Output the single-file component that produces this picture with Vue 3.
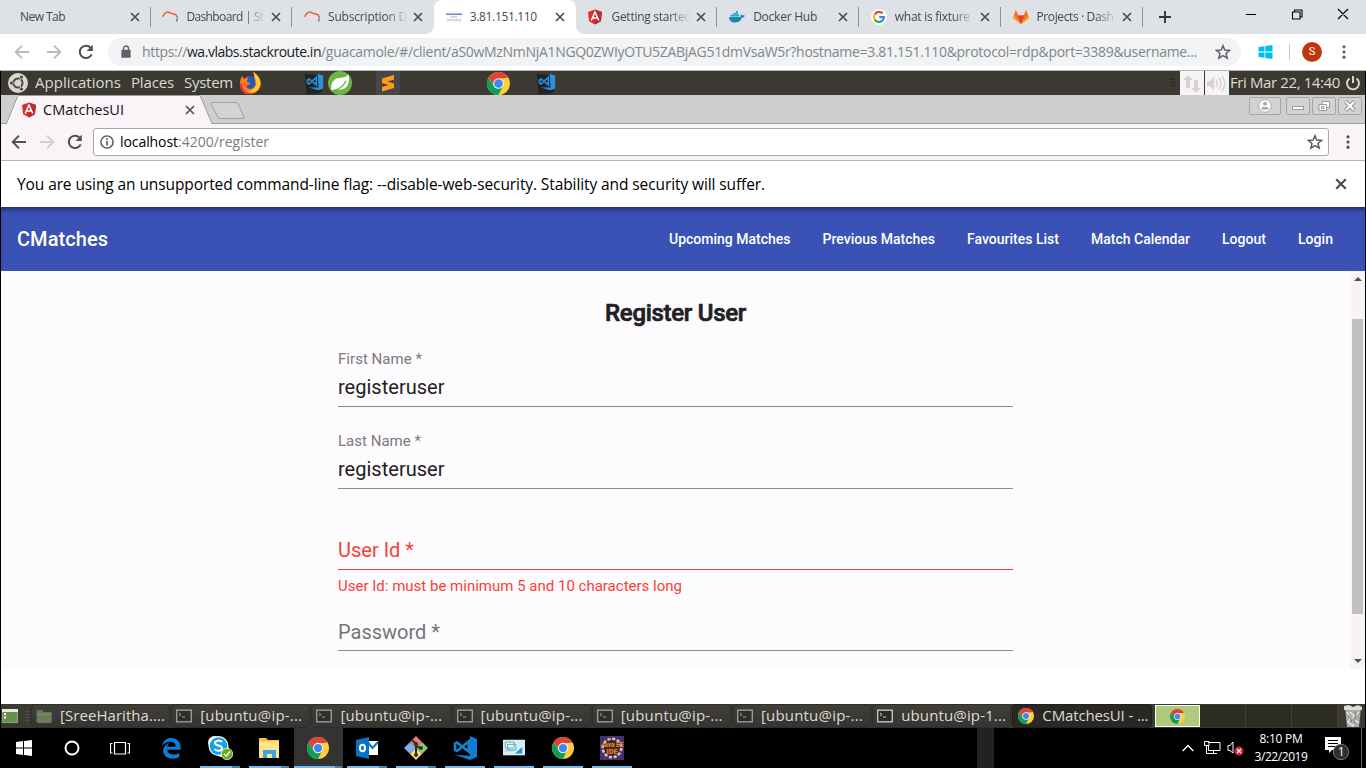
<script setup>
// Spreads the letters of a label so that it takes the given width in pixels.
const vFit = {
  mounted(el, { value }) {
    if (!value) return
    const natural = el.getBoundingClientRect().width
    el.style.letterSpacing = (value - natural) / el.textContent.length + 'px'
  }
}

const tabs = [
  { title: 'New Tab', w: 45 },
  { title: 'Dashboard | St', w: 77, icon: 'stack', sep: true, fade: true },
  { title: 'Subscription D', w: 79, icon: 'stack', fade: true, sep: true },
  { title: '3.81.151.110', w: 67, icon: 'doc', active: true },
  { title: 'Getting started', w: 80, icon: 'angular', fade: true },
  { title: 'Docker Hub', w: 64, icon: 'docker', sep: true },
  { title: 'what is fixture', w: 75, icon: 'google', sep: true, fade: true },
  { title: 'Projects · Dash', w: 77, icon: 'gitlab', sep: true, fade: true, last: true }
]

const links = [
  ['Upcoming Matches', 121.5],
  ['Previous Matches', 112.5],
  ['Favourites List', 92],
  ['Match Calendar', 99],
  ['Logout', 44],
  ['Login', 35]
]

const fields = [
  { label: 'First Name *', lw: 84, value: 'registeruser' },
  { label: 'Last Name *', lw: 83, value: 'registeruser' },
  { placeholder: 'User Id *', w: 76, error: 'User Id: must be minimum 5 and 10 characters long' },
  { placeholder: 'Password *', w: 102 }
]

const windows = [
  { title: '[SreeHaritha....', w: 105, icon: 'folder', dim: true },
  { title: '[ubuntu@ip-...', w: 102, icon: 'term', dim: true },
  { title: '[ubuntu@ip-...', w: 102, icon: 'term', dim: true },
  { title: '[ubuntu@ip-...', w: 102, icon: 'term', dim: true },
  { title: '[ubuntu@ip-...', w: 102, icon: 'term', dim: true },
  { title: '[ubuntu@ip-...', w: 102, icon: 'term', dim: true },
  { title: 'ubuntu@ip-1...', w: 105, icon: 'term' },
  { title: 'CMatchesUI - ...', w: 106, icon: 'chrome', active: true }
]

const apps = [
  { icon: 'edge' },
  { icon: 'skype', open: true, multi: true },
  { icon: 'explorer', open: true, multi: true },
  { icon: 'chrome', open: true, multi: true, active: true },
  { icon: 'outlook', open: true, multi: true },
  { icon: 'git', open: true, multi: true },
  { icon: 'code', open: true },
  { icon: 'remote', open: true },
  { icon: 'chrome', open: true },
  { icon: 'ide', open: true }
]
</script>

<template>
  <div class="screen">
    <svg class="defs" width="0" height="0">
      <symbol id="x" viewBox="0 0 10 10"><path d="M1 1 9 9M9 1 1 9" stroke="currentColor" stroke-width="1.7" fill="none" /></symbol>
      <symbol id="stack" viewBox="0 0 16 16">
        <path d="M.300 7.500C1.500 7.500 1.800 5.500 3 4.300C4.300 3 6.500 2.800 8 3.800C9.300 4.900 10.500 4.700 12 5C14.300 5.500 15.300 7 15.500 9" fill="none" stroke="#f0592b" stroke-width="1.500" />
        <path d="M15.300 9.500 14.500 12.500" stroke="#3f7f88" stroke-width="1.300" />
      </symbol>
      <symbol id="doc" viewBox="0 0 16 16">
        <path d="M0 2H16V14H0Z" fill="#f7f8fc" /><path d="M0 5.200H16" stroke="#5f72bd" stroke-width="1.300" /><path d="M5 7.800H11M1 11H15" stroke="#b9bbc6" />
      </symbol>
      <symbol id="angular" viewBox="0 0 16 16">
        <path d="M8 .5 15 3 13.900 12.200 8 15.500 2.100 12.200 1 3Z" fill="#dd2c34" /><path d="M8 .5 15 3 13.900 12.200 8 15.500Z" fill="#b52e31" />
        <path d="M4.200 11.500 8 3 11.800 11.500M5.700 9.100H10.300" fill="none" stroke="#fff" stroke-width="1.500" />
      </symbol>
      <symbol id="docker" viewBox="0 0 16 16">
        <path d="M0 8H11.500C12 7.500 12 6.200 11.600 5.300C12.400 4.900 13 5.900 13.300 6.500C14.300 6.100 15.300 6.300 16 6.800C15.300 8.200 14 8.500 13 8.500C11.500 12.500 9 13.500 5.500 13.500C2 13.500.2 11.500 0 8Z" fill="#1e88a8" />
        <path d="M1.500 5.700H10.500V7.600H1.500ZM4 3.900H9V5.500H4ZM7 2H9V3.700H7Z" fill="#2aa5cd" />
      </symbol>
      <symbol id="google" viewBox="0 0 16 16">
        <circle cx="8" cy="8" r="8" fill="#fff" />
        <g fill="none" stroke-width="2.200"><path d="M11.700 4.300A5 5 0 0 0 3.700 5.500" stroke="#ea4335" /><path d="M3.700 5.500A5 5 0 0 0 3.700 10.500" stroke="#fbbc05" /><path d="M3.700 10.500A5 5 0 0 0 11.300 11.700" stroke="#34a853" /><path d="M11.300 11.700A5 5 0 0 0 12.900 8.200H8.200" stroke="#4285f4" /></g>
      </symbol>
      <symbol id="gitlab" viewBox="0 0 16 16">
        <path d="M8 15 0 9 2.800 1 5.500 6.500H10.500L13.200 1 16 9Z" fill="#fc6d26" /><path d="M8 15 4.900 6.500H11.100Z" fill="#e24329" /><path d="M0 9 1.200 6.500 8 15ZM16 9 14.800 6.500 8 15Z" fill="#fca326" />
      </symbol>
      <symbol id="back" viewBox="0 0 16 16"><path d="M15 8H2M8 1.700 1.700 8 8 14.300" fill="none" stroke="currentColor" stroke-width="1.900" /></symbol>
      <symbol id="reload" viewBox="0 0 16 16"><path d="M13.700 10.300A6.200 6.200 0 1 1 12.600 3.700" fill="none" stroke="currentColor" stroke-width="2" /><path d="M14.800.8V7H8.600Z" fill="currentColor" /></symbol>
      <symbol id="star" viewBox="0 0 16 16"><path d="M8 1.700 9.800 6 14.700 6.400 11 9.500 12.200 14.200 8 11.700 3.800 14.200 5 9.500 1.300 6.400 6.200 6Z" fill="none" stroke="currentColor" stroke-width="1.500" /></symbol>
      <symbol id="dots" viewBox="0 0 4 16"><g fill="currentColor"><circle cx="2" cy="2.800" r="1.600" /><circle cx="2" cy="8" r="1.600" /><circle cx="2" cy="13.200" r="1.600" /></g></symbol>
      <symbol id="chrome" viewBox="0 0 24 24">
        <circle cx="12" cy="12" r="12" fill="#fdd03b" />
        <path d="M1.600 6A12 12 0 0 1 22.400 6L12 7 7.700 14.500Z" fill="#db4437" />
        <path d="M1.600 6A12 12 0 0 0 12 24L16.600 14.500 12 17 7.400 14.600Z" fill="#0f9d58" />
        <circle cx="12" cy="12" r="5.600" fill="#f4f4f4" /><circle cx="12" cy="12" r="4.500" fill="#4285f4" />
      </symbol>
      <symbol id="code" viewBox="0 0 24 24">
        <path d="M17 0 24 3V21L17 24 1 18.500 17 20Z" fill="#0e7ed0" /><path d="M15.700 5.500V15.500L4 6.500 2 7.500V14L4 15Z" fill="none" stroke="#1681cd" stroke-width="2.600" />
      </symbol>
      <symbol id="codedark" viewBox="0 0 24 24">
        <path d="M2 2 20 4 20 23 4 24Z" fill="#202326" /><path d="M16 2 22 4V18L17 20 6 17 17 17Z" fill="#2a91da" /><path d="M14.500 6V14L6.500 7.500 5 9V12L6.500 13Z" fill="none" stroke="#2489d2" stroke-width="2" />
      </symbol>
      <symbol id="firefox" viewBox="0 0 24 24">
        <circle cx="11.500" cy="13" r="9" fill="#2456bd" />
        <path d="M15 0C24 6 25 15 19 20C12 26 2 23 1 14C.500 10 2 6 3.500 4L5 7.500C7 5.500 9 6 10 6L8 10 12 12C10 14 7 13 8 16C12 20 18 16 17 11C16 8 16 4 15 0Z" fill="#ff7b16" />
        <path d="M15 0C24 6 24 14 19 19C15 22 11 22 8 20C17 20 20 12 17 7Z" fill="#ffcb2d" />
        <path d="M1 12C1 21 9 25 17 22C10 23 3 20 3 12Z" fill="#e92d4f" />
      </symbol>
      <symbol id="leaf" viewBox="0 0 24 24"><circle cx="12" cy="12" r="12" fill="#6cb53f" /><path d="M20.500 3C22 11 20 18 13 18.500C9 19 5 18 3.500 19.500C2.500 14 4 8 11 7C16 6.500 19 6 20.500 3Z" fill="#fff" /><path d="M4 20C10 19 15 16 18 10" fill="none" stroke="#6cb53f" stroke-width="1.400" /></symbol>
      <symbol id="sublime" viewBox="0 0 24 24"><rect width="24" height="24" rx="2" fill="#474747" /><path d="M6 7.500 18 4V8.500L11.500 10.500 18 12.500V17L6 20.500V16L12.500 14 6 12Z" fill="#ff9a1c" /></symbol>
      <symbol id="ubuntu" viewBox="0 0 20 20">
        <circle cx="10" cy="10" r="10" fill="#dad7d0" /><circle cx="10" cy="10" r="4.500" fill="none" stroke="#494841" stroke-width="2" />
        <path d="M10 10 2 10M10 10 14.500 2.500M10 10 14.500 17.500" stroke="#dad7d0" stroke-width="1.200" /><g fill="#494841"><circle cx="3.500" cy="10" r="1.600" /><circle cx="13.500" cy="4" r="1.600" /><circle cx="13.500" cy="16" r="1.600" /></g>
      </symbol>
      <symbol id="folder" viewBox="0 0 16 16"><path d="M.5 2H7V4H15.500V14H.5Z" fill="#7b8a72" /><path d="M1.500 6H15.500V15H1.500Z" fill="#7b9c66" /><path d="M1 6H15.500" stroke="#a3b796" /></symbol>
      <symbol id="term" viewBox="0 0 16 16"><rect x=".7" y="2.200" width="14.600" height="11.600" fill="#292a29" stroke="#c4c4c0" stroke-width="1.400" /><path d="M3 5 5 6.500 3 8M6 9H9" fill="none" stroke="#ddd" stroke-width=".9" /></symbol>
      <symbol id="edge" viewBox="0 0 24 24"><path d="M2 10C4 1 12-.5 17.500 2.500C22 5 23 9 22.500 14H8C8.500 20 16 20.500 21 17.500V22C14 25 4.500 23.500 3.500 16C3 11 6.500 8 10 6.500C8.500 8 8 9.500 8 10.500H17C17 6 13 4.500 9 5.500C6 6 3.500 8 2 10Z" fill="#0c7bd9" /></symbol>
      <symbol id="skype" viewBox="0 0 26 26">
        <circle cx="7.500" cy="7.500" r="6.500" fill="#fff" /><circle cx="15" cy="15" r="7" fill="#fff" /><circle cx="11.500" cy="11" r="10" fill="#fff" /><circle cx="11.500" cy="11" r="8.800" fill="#15a4e2" />
        <path d="M15 7C13 4.800 8 5.300 8 8C8 11.500 15 9.500 15 13.300C15 16.500 9.500 16.500 7.500 14" fill="none" stroke="#fff" stroke-width="2" />
        <circle cx="20" cy="19" r="5.700" fill="#6cac16" stroke="#fff" stroke-width=".7" /><path d="M17 19 19.200 21 23 16.500" fill="none" stroke="#fff" stroke-width="1.500" />
      </symbol>
      <symbol id="explorer" viewBox="0 0 24 24"><path d="M2 2H9L11 4H22V22H2Z" fill="#f1c451" /><path d="M2 5.500H22V22H2Z" fill="#fde48b" /><path d="M6 22V14H19V22H15V18H10V22Z" fill="#3ba5df" /></symbol>
      <symbol id="outlook" viewBox="0 0 24 24"><path d="M12 5H23V19H12Z" fill="#fff" /><path d="M12.500 6 17.500 12 23 6" fill="none" stroke="#0873c5" stroke-width="2" /><path d="M1 4 14 1V23L1 20Z" fill="#0873c5" /><ellipse cx="7.500" cy="12" rx="2.500" ry="3.200" fill="none" stroke="#fff" stroke-width="2" /></symbol>
      <symbol id="git" viewBox="0 0 24 24"><path d="M12 0 18 6 12 12 6 6Z" fill="#ef7b75" /><path d="M0 12 6 6 12 12 6 18Z" fill="#7caee9" /><path d="M24 12 18 6 12 12 18 18Z" fill="#8bce68" /><path d="M12 24 6 18 12 12 18 18Z" fill="#f5de79" /><path d="M8 4 12 8V20M12 10 16 12" stroke="#342d29" stroke-width="2" fill="none" /><g fill="#342d29"><circle cx="12" cy="8" r="2" /><circle cx="17" cy="12" r="2" /><circle cx="12" cy="19" r="2" /></g></symbol>
      <symbol id="remote" viewBox="0 0 24 24"><path d="M0 3H24V20H0Z" fill="#d5eef7" /><path d="M2.500 5.500H12V12H2.500ZM5 8H14V14H5Z" fill="#e9fafd" stroke="#52a4b8" /><path d="M13 18 21 11V18Z" fill="#1b9ac4" /><path d="M2 15H11" stroke="#8ac3d0" /></symbol>
    </svg>

    <!-- local browser -->
    <header class="strip">
      <div class="tabs">
        <div v-for="(t, i) in tabs" :key="i" class="tab" :class="{ active: t.active, sep: t.sep, last: t.last }">
          <svg v-if="t.icon" class="fav"><use :href="'#' + t.icon" /></svg>
          <div class="ttl" :class="{ fade: t.fade }"><span v-fit="t.w" class="fit">{{ t.title }}</span></div>
          <svg class="close"><use href="#x" /></svg>
        </div>
      </div>
      <svg class="plus" viewBox="0 0 12 12"><path d="M6 0V12M0 6H12" stroke="#34373a" stroke-width="1.900" /></svg>
      <svg class="winbtns" viewBox="0 0 104 16"><g fill="none" stroke="#000" stroke-width="1.100"><path d="M0 8.500H10M46.500 6H54V13H46.500ZM48.500 6V4H56V11H54M92 3 102 13M102 3 92 13" /></g></svg>
    </header>
    <div class="bar">
      <svg class="i16 off"><use href="#back" /></svg>
      <svg class="i16 off flip"><use href="#back" /></svg>
      <svg class="i16 rel"><use href="#reload" /></svg>
      <div class="omni">
        <svg class="lock" viewBox="0 0 10 14"><path d="M1 5.500H9V12H1Z" fill="#5f6368" stroke="#5f6368" stroke-width="1.300" /><path d="M2.500 6V3.500A2.500 2.500 0 0 1 7.500 3.500V6" fill="none" stroke="#5f6368" stroke-width="1.400" /></svg>
        <div class="url"><span v-fit="45" class="fit">https://</span><span v-fit="134" class="fit host">wa.vlabs.stackroute.in</span><span v-fit="876" class="fit">/guacamole/#/client/aS0wMzNmNjA1NGQ0ZWIyOTU5ZABjAG51dmVsaW5r?hostname=3.81.151.110&amp;protocol=rdp&amp;port=3389&amp;username...</span></div>
        <svg class="i16 star"><use href="#star" /></svg>
      </div>
      <svg class="win" viewBox="0 0 14 14"><path d="M0 2 6 1.200V6.600H0ZM6.800 1.100 14 0V6.600H6.800ZM0 7.400H6V12.800L0 12ZM6.800 7.400H14V14L6.800 12.900Z" fill="#00bcf2" /></svg>
      <i class="vr"></i>
      <div class="avatar">S</div>
      <svg class="dots"><use href="#dots" /></svg>
    </div>

    <!-- remote desktop -->
    <main class="remote">
      <div class="panel">
        <svg class="ub"><use href="#ubuntu" /></svg>
        <span class="p1"><span v-fit="86" class="fit">Applications</span></span>
        <span class="p2"><span v-fit="43" class="fit">Places</span></span>
        <span class="p3"><span v-fit="49" class="fit">System</span></span>
        <svg class="l l1"><use href="#firefox" /></svg>
        <svg class="l l2"><use href="#codedark" /></svg>
        <svg class="l l3"><use href="#leaf" /></svg>
        <svg class="l l4"><use href="#sublime" /></svg>
        <svg class="l l5"><use href="#chrome" /></svg>
        <svg class="l l6"><use href="#codedark" /></svg>
        <i class="pgrip"></i>
        <svg class="tray" viewBox="0 0 49 24">
          <path d="M0 0H24V24H0ZM25 0H49V24H25Z" fill="#f8f3f7" />
          <path d="M6 17V9H3L8 4.500 13 9H10V17ZM14 9H18V17H21L16 21.500 11 17H14Z" fill="#d6d2cc" />
          <path d="M27 10H30L34 6V19L30 15H27Z" fill="#d6d2cc" /><path d="M36 9Q38.500 12.500 36 16M39 7Q43 12.500 39 18M42 5Q47.500 12.500 42 20" fill="none" stroke="#d6d2cc" stroke-width="1.500" />
        </svg>
        <span class="date"><span v-fit="110" class="fit">Fri Mar 22, 14:40</span></span>
        <svg class="pow" viewBox="0 0 16 16"><path d="M4.500 3.500A6 6 0 1 0 11.500 3.500M8 1V8" fill="none" stroke="#dfdbd2" stroke-width="1.900" /></svg>
      </div>

      <div class="istrip">
        <svg class="ishape" viewBox="0 0 250 29"><path d="M0 28.500H5.500L16.500 1.500Q17 .5 18 .5H198Q199 .5 199.500 1.500L211 28.500V29.500H0Z" fill="#f8f4f8" stroke="#9c9a9c" /><path d="M0 0H16L5 28H0Z" fill="#cecece" /><path d="M212 7.500H235Q236.500 7.500 237 8.500L243 22Q243.500 23.500 242 23.500H219Q217.500 23.500 217 22L210 9Q209.500 7.500 212 7.500Z" fill="#d5d3d5" stroke="#a09ea0" /></svg>
        <div class="ilabel"><svg class="ang"><use href="#angular" /></svg><span class="cm"><span v-fit="81" class="fit">CMatchesUI</span></span><svg class="ix"><use href="#x" /></svg></div>
        <div class="ctl"><span class="c user"><svg viewBox="0 0 16 16"><circle cx="8" cy="8" r="6.300" fill="#fff" stroke="#aaa" /><circle cx="8" cy="5.800" r="2" fill="#aaa" /><path d="M4.500 11.500V10Q4.500 9 6 9H10Q11.500 9 11.500 10V11.500Z" fill="#aaa" /></svg></span><span class="c"><svg viewBox="0 0 16 16"><rect x="2.500" y="8.500" width="11" height="3" fill="#fff" stroke="#999" /></svg></span><span class="c"><svg viewBox="0 0 16 16"><path d="M6 3.500H13.500V9.500H10.500V12.500H3V6.500H6ZM6 6.500H10.500V9.500M5.500 8.500H8V10.500H5.500Z" fill="#fff" stroke="#999" /></svg></span><span class="c"><svg viewBox="0 0 16 16"><path d="M3.500 3.500 12.500 12.500M12.500 3.500 3.500 12.500" stroke="#999" stroke-width="4" /><path d="M4 4 12 12M12 4 4 12" stroke="#fff" stroke-width="2" /></svg></span></div>
      </div>
      <div class="ibar">
        <svg class="i16"><use href="#back" /></svg>
        <svg class="i16 flip dis"><use href="#back" /></svg>
        <svg class="i16"><use href="#reload" /></svg>
        <div class="iomni">
          <svg class="info" viewBox="0 0 14 14"><circle cx="7" cy="7" r="6.100" fill="none" stroke="#555" stroke-width="1.400" /><path d="M7 6V10.500M7 3.300V4.900" stroke="#555" stroke-width="1.600" /></svg>
          <span class="iurl"><span v-fit="58" class="fit ihost">localhost</span><span v-fit="91" class="fit">:4200/register</span></span>
          <svg class="i16 istar"><use href="#star" /></svg>
        </div>
        <svg class="dots idots"><use href="#dots" /></svg>
      </div>
      <div class="notice"><span v-fit="748" class="fit">You are using an unsupported command-line flag: --disable-web-security. Stability and security will suffer.</span><svg class="nx"><use href="#x" /></svg></div>

      <nav class="nav">
        <span class="brand"><span v-fit="91" class="fit">CMatches</span></span>
        <div class="links"><span v-for="l in links" :key="l[0]" v-fit="l[1]" class="fit">{{ l[0] }}</span></div>
      </nav>
      <section class="page">
        <form class="form">
          <h2><span v-fit="141" class="fit">Register User</span></h2>
          <div v-for="(f, i) in fields" :key="i" class="field" :class="{ bad: f.error, gap: i === 2 }">
            <label v-if="f.label"><span v-fit="f.lw" class="fit">{{ f.label }}</span></label>
            <div v-if="f.value" class="val"><span v-fit="106.5" class="fit">{{ f.value }}</span></div>
            <div v-else class="ph"><span v-fit="f.w" class="fit">{{ f.placeholder }}</span></div>
            <div v-if="f.error" class="err"><span v-fit="344" class="fit">{{ f.error }}</span></div>
          </div>
        </form>
        <div class="scroll"><i class="up"></i><i class="thumb"></i><i class="down"></i></div>
      </section>
      <div class="blank"></div>

      <footer class="mate">
        <svg class="desk" viewBox="0 0 18 24"><path d="M1.500 5.500H16.500V18.500H1.500Z" fill="#688f4c" stroke="#8bab72" /><path d="M1 5H17V8H1Z" fill="#e6e9df" /><path d="M3 10H5M3 13.500H5" stroke="#fff" stroke-width="2" /></svg>
        <i class="grip"></i>
        <div class="wins"><div v-for="(w, i) in windows" :key="i" class="wbtn" :class="{ on: w.active }"><svg class="wi" :class="{ dim: w.dim }"><use :href="'#' + w.icon" /></svg><span class="wt"><span v-fit="w.w" class="fit">{{ w.title }}</span></span></div></div>
        <div class="spaces"><div class="cur"><svg><use href="#chrome" /></svg></div><div></div><div></div><div></div></div>
        <svg class="trash" viewBox="0 0 20 24"><path d="M2 3 18 3 16 23H4Z" fill="#aaa9a5" /><path d="M1 2 6 1 10 3 15 1 19 3V6H1Z" fill="#dddcd8" /><path d="M4 8 7 14 5 18 10 22 12 16 16 19M7 8 11 12 16 8M9 14 13 11" stroke="#e8e7e3" stroke-width="1.500" fill="none" /><path d="M5 11 9 18M13 8 11 20" stroke="#777670" fill="none" /></svg>
      </footer>
    </main>

    <footer class="taskbar">
      <div class="sys"><svg viewBox="0 0 20 20"><path d="M2 4 9 3V9.500H2ZM10 2.900 18 2V9.500H10ZM2 10.500H9V17L2 16ZM10 10.500H18V18L10 17.100Z" fill="#fff" /></svg></div>
      <div class="sys"><svg viewBox="0 0 20 20"><circle cx="10" cy="10" r="6.500" fill="none" stroke="#fff" stroke-width="2" /></svg></div>
      <div class="sys"><svg viewBox="0 0 20 20"><path d="M4.500 4.500H15.500V16H4.500ZM2.500 5.500H.5V15H2.500M17.500 5.500H19.500V15H17.500" fill="none" stroke="#fff" stroke-width="1.200" /></svg></div>
      <div class="apps">
        <div v-for="(a, i) in apps" :key="i" class="app" :class="{ open: a.open, multi: a.multi, act: a.active }">
          <svg v-if="a.icon === 'ide'" viewBox="0 0 24 24">
            <rect width="24" height="24" fill="#49306d" /><circle cx="12" cy="12" r="9" fill="none" stroke="#d2c9bd" stroke-width="3" stroke-dasharray="3 1.700" /><circle cx="12" cy="12" r="8" fill="#3d2a2c" />
            <g fill="#f08a19" font-family="Roboto, sans-serif" font-weight="700"><text x=".5" y="11.300" font-size="6.500" textLength="23" lengthAdjust="spacingAndGlyphs">Java EE</text><text x="6.500" y="18" font-size="6.500" textLength="11" lengthAdjust="spacingAndGlyphs">IDE</text></g>
          </svg>
          <svg v-else :class="a.icon"><use :href="'#' + a.icon" /></svg>
        </div>
      </div>
      <i class="slab"></i>
      <div class="status">
        <svg class="caret" viewBox="0 0 12 8"><path d="M.7 7 6 1.500 11.300 7" fill="none" stroke="#fff" stroke-width="1.300" /></svg>
        <svg class="net" viewBox="0 0 17 16"><path d="M4.500 2.500H16V10.500H4.500V6M.5 1.500H5V5.500H.5ZM2.500 6V13.500H12M9.500 10.500V13.500M6 13.500H13" fill="none" stroke="#fff" /></svg>
        <svg class="vol" viewBox="0 0 17 16"><path d="M1 5.500H3L6 2V13L3 10.500H1Z" fill="none" stroke="#fff" /><circle cx="12" cy="11" r="4.500" fill="#da2031" /><path d="M10 9 14 13M14 9 10 13" stroke="#fff" stroke-width="1.300" /></svg>
        <div class="clock"><span v-fit="43" class="fit">8:10 PM</span><span v-fit="53" class="fit">3/22/2019</span></div>
        <svg class="note" viewBox="0 0 26 26"><path d="M1 2H17V15H8L5 18V15H1Z" fill="#fff" /><path d="M4 5.500H14M4 8.500H14M4 11.500H11" stroke="#000" /><circle cx="17" cy="17" r="7.700" fill="#2f2f2f" stroke="#777" /><text x="13.700" y="21.300" fill="#fff" font-family="Open Sans, sans-serif" font-size="12">1</text></svg>
      </div>
      <i class="edgeline"></i>
    </footer>
  </div>
</template>

<style>
body { margin: 0; overflow: hidden; }
</style>

<style scoped>
* { box-sizing: border-box; }
.screen { width: 1366px; height: 768px; display: flex; flex-direction: column; overflow: hidden; background: #fff; font-family: "Open Sans", "Noto Sans", sans-serif; }
.defs { position: absolute; }
svg { flex: none; display: block; }
.fit { display: inline-block; white-space: pre; flex: none; }
.i16 { width: 16px; height: 16px; }
.flip { transform: scaleX(-1); }

.strip { height: 34px; flex: none; background: #dee1e6; display: flex; align-items: center; padding-left: 9px; }
.tabs { display: grid; grid-template-columns: repeat(8, 141.7px); height: 34px; }
.tab { display: flex; align-items: center; position: relative; padding: 0 11px 0 11px; font-size: 12px; color: #45494d; }
.tab.sep::after { content: ""; position: absolute; left: -1px; top: 7px; height: 20px; width: 1px; background: #909398; }
.tab.last::before { content: ""; position: absolute; right: 0; top: 7px; height: 20px; width: 1px; background: #909398; }
.tab.active { background: #fff; border-radius: 8px 8px 0 0; }
.tab.active::before, .tab.active::after { content: ""; position: absolute; bottom: 0; width: 8px; height: 8px; }
.tab.active::before { left: -8px; background: radial-gradient(circle at 0 0, #dee1e6 7.5px, #fff 8px); }
.tab.active::after { right: -8px; background: radial-gradient(circle at 100% 0, #dee1e6 7.5px, #fff 8px); }
.fav { width: 16px; height: 16px; margin-left: .7px; margin-right: 8px; }
.ttl { flex: 1; overflow: hidden; line-height: 20px; }
.ttl.fade { -webkit-mask-image: linear-gradient(90deg, #000 72%, transparent 100%); mask-image: linear-gradient(90deg, #000 72%, transparent 100%); }
.close { width: 10px; height: 10px; margin-left: 5px; color: #4a4d51; }
.tab:first-child .close { margin-left: 0; }
.plus { width: 12px; height: 12px; margin-left: 16px; }
.winbtns { width: 104px; height: 16px; margin-left: 75px; margin-bottom: 6px; }

.bar { height: 37px; flex: none; display: flex; align-items: center; padding: 0 0 1px 14px; border-bottom: 1px solid #b3b3b3; color: #5f6368; }
.bar .off { color: #b9bbbe; margin-right: 16px; }
.bar .rel { margin-right: 14px; color: #4c5054; }
.omni { width: 1133px; height: 28px; border-radius: 14px; background: #f1f3f4; display: flex; align-items: center; padding: 0 10px 0 13px; }
.lock { width: 10px; height: 14px; margin-right: 11px; }
.url { display: flex; font-size: 14px; color: #80868b; flex: 1; line-height: 20px; }
.host { color: #202124; }
.star { color: #5f6368; }
.win { width: 15px; height: 14px; margin-left: 17px; }
.vr { width: 1px; height: 16px; background: #c8c9cb; margin-left: 16px; }
.avatar { width: 20px; height: 20px; border-radius: 50%; background: #bf360c; color: #fff; font: 11px/20px Roboto, sans-serif; text-align: center; margin-left: 12px; }
.dots { width: 4px; height: 16px; margin-left: 20px; }

.remote { height: 657px; flex: none; border: solid #000; border-width: 0 1px; display: flex; flex-direction: column; }
.panel { height: 24px; flex: none; background: #3b3932; display: flex; align-items: center; padding-left: 7px; color: #dfdbd2; font-size: 15px; line-height: 22px; }
.ub { width: 20px; height: 20px; }
.p1, .p2, .p3, .date { padding-bottom: 2px; }
.p1 { margin-left: 7px; width: 86px; }
.p2 { margin-left: 10px; width: 43px; }
.p3 { margin-left: 10px; width: 49px; }
.l { width: 24px; height: 24px; }
.l1 { margin-left: 6px; width: 23px; height: 23px; }
.l2 { margin-left: 41px; width: 22px; height: 22px; }
.l3 { margin-left: 3px; }
.l4 { margin-left: 24px; }
.l5 { margin-left: 87px; width: 23px; height: 23px; }
.l6 { margin-left: 25px; width: 22px; height: 22px; }
.pgrip { width: 4px; height: 8px; margin: 0 5px 0 auto; background: repeating-linear-gradient(#25241f 0 1px, transparent 1px 3px); }
.tray { width: 49px; height: 24px; }
.date { width: 110px; margin-left: 1px; }
.pow { width: 16px; height: 16px; margin: 0 4px 0 5px; }

.istrip { height: 29px; flex: none; background: #cecece; border-bottom: 1px solid #9c9a9c; display: flex; position: relative; }
.ishape { position: absolute; left: 0; top: 0; width: 250px; height: 29px; }
.ilabel { position: relative; display: flex; align-items: center; padding: 2px 0 0 20px; font-size: 14.5px; color: #111; width: 250px; line-height: 20px; }
.ang { width: 16px; height: 16px; }
.cm { width: 81px; margin-left: 6px; }
.ix { width: 10px; height: 10px; margin-left: 61px; color: #555; }
.ctl { margin-left: auto; display: flex; gap: 2px; padding: 2px 3px 0 0; }
.c { width: 24px; height: 18px; border: 1px solid #a6a4a6; border-radius: 2px; background: #d2d2d2; display: flex; align-items: center; justify-content: center; }
.c svg { width: 16px; height: 16px; }
.c.user { width: 32px; margin-right: 3px; }

.ibar { height: 37px; flex: none; background: #f8f4f8; border-bottom: 1px solid #b5b3b5; display: flex; align-items: center; padding-left: 10px; gap: 12px; color: #505052; }
.ibar .dis { color: #d0ced0; }
.iomni { width: 1236px; height: 28px; border: 1px solid #aaa8aa; border-radius: 3px; background: #fff; display: flex; align-items: center; padding: 0 5px 0 6px; margin-left: -2px; }
.info { width: 14px; height: 14px; }
.iurl { display: flex; flex: 1; margin-left: 6px; font-size: 14px; line-height: 20px; color: #7b7b7b; }
.ihost { color: #000; }
.istar { color: #5a5a5a; }
.idots { margin-left: 5px; }
.notice { height: 46px; flex: none; background: #fff; display: flex; align-items: center; justify-content: space-between; padding: 0 18px 0 16px; font-size: 15.5px; color: #000; }
.nx { width: 12px; height: 12px; color: #4a4a4a; }

.nav { height: 64px; flex: none; background: #3a51b5; box-shadow: inset 0 5px 5px -3px rgba(0,0,0,.5); display: flex; align-items: center; justify-content: space-between; padding: 0 32px 0 16px; font-family: Roboto, sans-serif; color: #fff; font-weight: 500; }
.brand { font-size: 20px; }
.links { display: flex; gap: 32px; font-size: 14px; }

.page { height: 398px; flex: none; background: #fefbff; display: flex; overflow: hidden; font-family: Roboto, sans-serif; }
.form { width: 675px; margin-left: 337px; color: #212121; }
h2 { margin: 26px 0 19px; font-size: 24px; line-height: 32px; font-weight: 500; text-align: center; -webkit-text-stroke: .7px #212121; }
.field { height: 82px; padding-top: 3px; position: relative; }
.field::after { content: ""; position: absolute; left: 0; right: 0; top: 58px; height: 1px; background: #8f8c90; }
.field label { display: block; height: 17px; font-size: 15px; line-height: 17px; color: #7b797c; }
.val, .ph { font-size: 20px; line-height: 24px; }
.val { padding-top: 7px; }
.ph { padding-top: 25px; color: #757376; }
.gap { height: 81px; margin-top: -1px; }
.bad .ph, .err { color: #f44336; }
.bad .ph { padding-top: 24px; }
.bad::after { background: #e53f36; }
.err { font-size: 15px; line-height: 18px; padding-top: 15px; }
.scroll { width: 15px; margin-left: auto; background: #f7f3f7; display: flex; flex-direction: column; align-items: center; }
.up, .down { width: 0; height: 0; border: 4px solid transparent; }
.up { border-bottom: 4px solid #505050; border-top: 0; margin-top: 6px; }
.down { border-top: 4px solid #505050; border-bottom: 0; margin-top: 45px; }
.thumb { width: 11px; height: 295px; background: #c3c0c4; margin-top: 38px; }
.blank { height: 35px; flex: none; background: #fff; }

.mate { height: 24px; flex: none; background: #3b3932; display: flex; align-items: center; color: #dfdbd2; font-size: 15px; }
.desk { width: 18px; height: 24px; }
.grip { width: 4px; height: 10px; margin: 0 5px 0 6px; background: repeating-linear-gradient(#55534a 0 1px, transparent 1px 3px); }
.wins { display: grid; grid-template-columns: repeat(8, 140.2px); height: 24px; margin-left: -3px; }
.wbtn { display: flex; align-items: center; padding-left: 4px; border: 1px solid #2e2d27; border-radius: 4px; background: linear-gradient(#403f3a, #353430); margin-right: 1px; line-height: 20px; }
.wbtn.on { background: #292825; border-color: #211f1c; padding-left: 5px; }
.wt { padding-bottom: 2px; }
.wi { width: 16px; height: 16px; margin-right: 8px; }
.dim { opacity: .7; }
.spaces { display: grid; grid-template-columns: 45px 46px 46px 46px; height: 22px; margin-left: 2px; }
.spaces div { background: #2c2b24; border-right: 1px solid #42413a; }
.spaces .cur { background: #afca7b; border: 1px solid #fff; display: flex; align-items: center; justify-content: center; }
.cur svg { width: 15px; height: 15px; }
.trash { width: 20px; height: 24px; margin-left: auto; margin-right: 2px; }

.taskbar { height: 40px; flex: none; background: #000; display: flex; align-items: stretch; color: #fff; }
.sys { width: 48px; display: flex; align-items: center; justify-content: center; }
.sys svg { width: 20px; height: 20px; }
.apps { display: flex; margin-left: 2.500px; }
.app { width: 49px; position: relative; display: flex; align-items: center; justify-content: center; }
.app svg { width: 24px; height: 24px; }
.app svg.chrome { width: 22px; height: 22px; }
.app svg.skype { width: 26px; height: 26px; }
.app svg.edge { width: 22px; height: 24px; }
.app.open::after { content: ""; position: absolute; left: 4px; bottom: 0; width: 40px; height: 2px; background: #76b9ed; }
.app.multi::after { background: linear-gradient(90deg, #76b9ed 32px, #527fa4 32px); }
.app.act { background: #333; }
.app.act::after { left: 0; width: 48px; background: linear-gradient(90deg, #76b9ed 41px, #527fa4 41px); }
.slab { width: 17px; background: #222; margin-left: 340.5px; }
.status { margin-left: auto; display: flex; align-items: center; }
.caret { width: 12px; height: 8px; }
.net { width: 17px; height: 16px; margin-left: 10px; }
.vol { width: 17px; height: 16px; margin-left: 6px; }
.clock { width: 54px; margin-left: 10px; display: flex; flex-direction: column; align-items: center; font-size: 12px; line-height: 18px; }
.note { width: 26px; height: 26px; margin-left: 16px; }
.edgeline { width: 1px; background: #666; margin: 0 4px 0 11px; }
</style>
